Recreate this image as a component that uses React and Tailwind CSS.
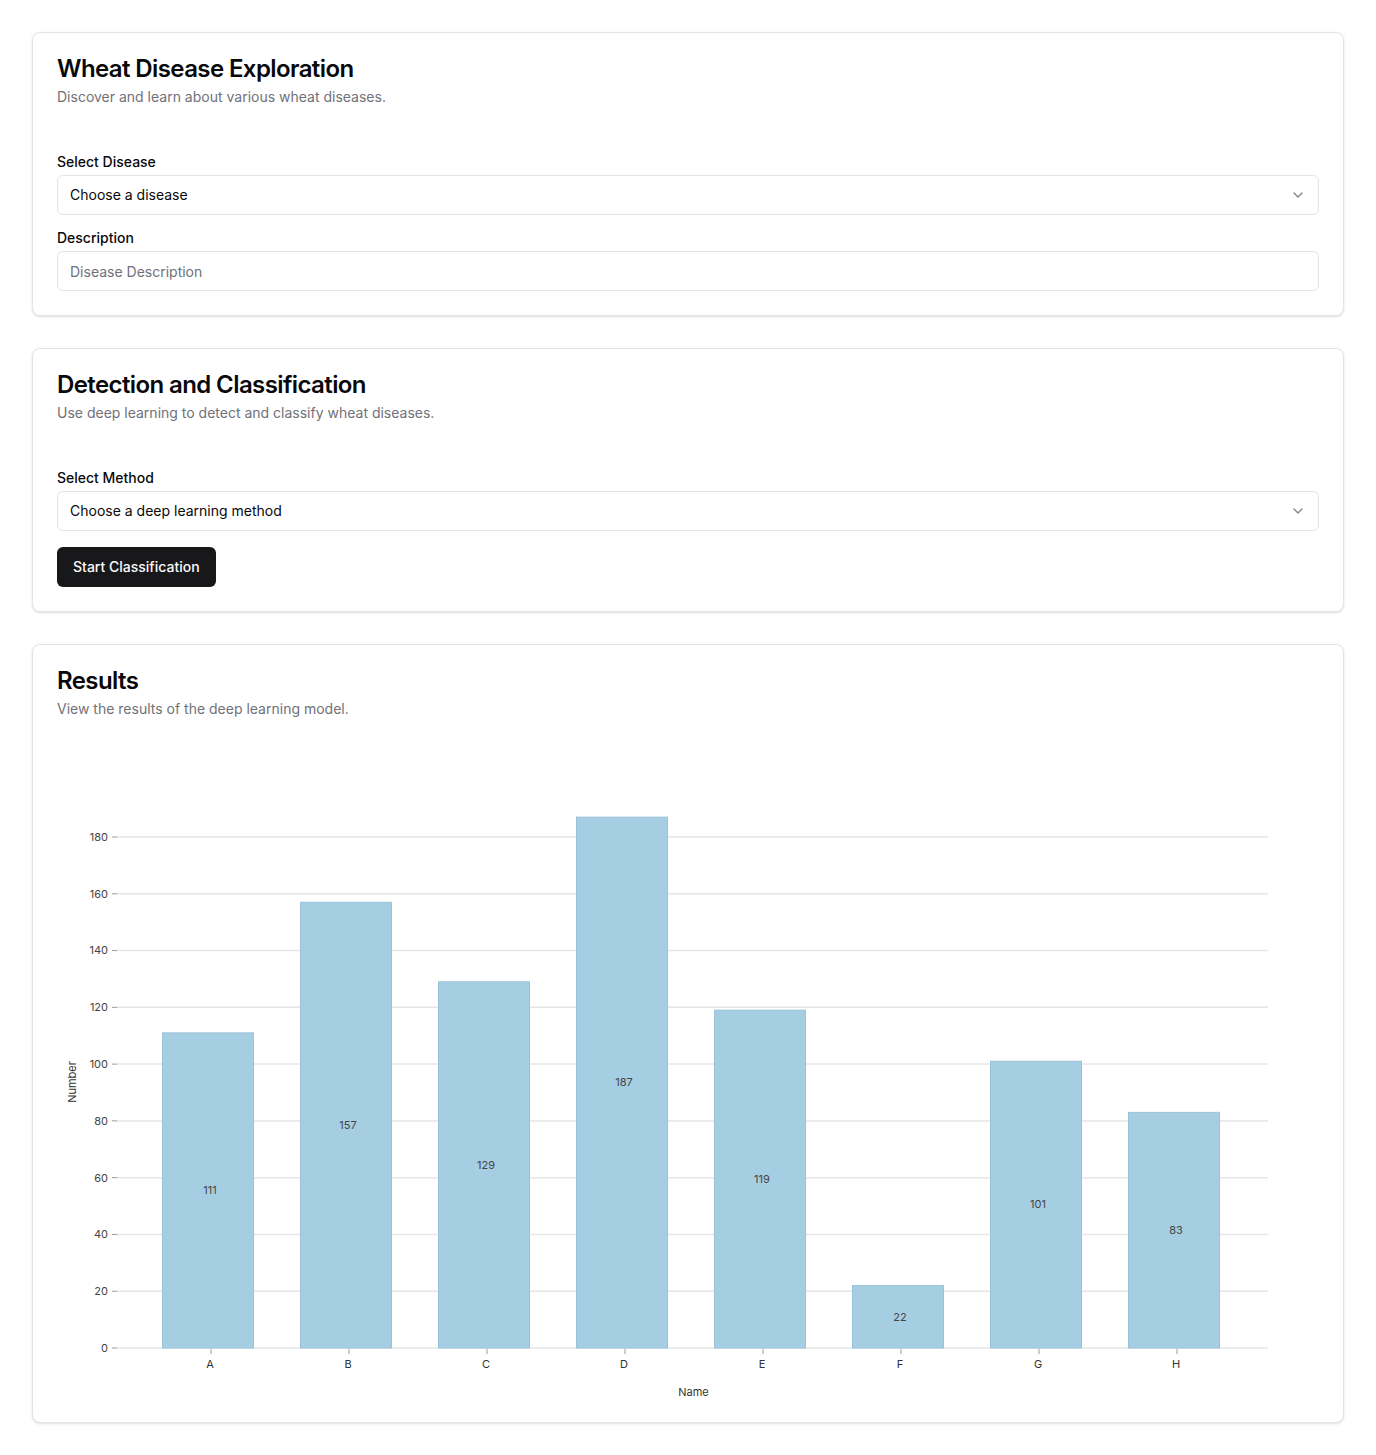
import React from 'react';
import { ChevronDown } from 'lucide-react';

const DATA = [
  { name: 'A', value: 111 },
  { name: 'B', value: 157 },
  { name: 'C', value: 129 },
  { name: 'D', value: 187 },
  { name: 'E', value: 119 },
  { name: 'F', value: 22 },
  { name: 'G', value: 101 },
  { name: 'H', value: 83 },
];

// chart geometry (svg coords)
const W = 1262;
const H = 655;
const X0 = 60;
const X1 = 1211;
const Y0 = 605;
const UNIT = 511 / 180;
const STEP = 138;
const FIRST = 154;
const TICKS = [0, 20, 40, 60, 80, 100, 120, 140, 160, 180];

function Card({ title, desc, children }) {
  return (
    <div className="rounded-lg border border-[#e4e4e7] bg-white shadow-sm">
      <div className="flex flex-col gap-1.5 p-6">
        <h3 className="text-2xl leading-none font-semibold tracking-tight text-[#09090b]">{title}</h3>
        <p className="text-sm text-[#71717a]">{desc}</p>
      </div>
      <div className="px-6 pb-6 pt-6">{children}</div>
    </div>
  );
}

function Select({ text }) {
  return (
    <button
      type="button"
      className="flex h-10 w-full items-center justify-between rounded-md border border-[#e4e4e7] bg-white px-3 text-sm text-[#09090b]"
    >
      <span>{text}</span>
      <ChevronDown className="h-4 w-4 opacity-50" />
    </button>
  );
}

function Label({ children }) {
  return <label className="block text-sm leading-none font-medium text-[#09090b]">{children}</label>;
}

function Chart() {
  return (
    <svg width={W} height={H} className="block overflow-visible" style={{ fontFamily: 'Inter, sans-serif' }}>
      {TICKS.map((t) => {
        const y = Y0 - t * UNIT;
        return (
          <g key={t}>
            <line x1={X0} x2={X1} y1={y} y2={y} stroke="#e6e6e6" strokeWidth="1.5" />
            <line x1={X0 - 5} x2={X0} y1={y} y2={y} stroke="#999" strokeWidth="1" />
            <text x={X0 - 9} y={y} dy="0.35em" textAnchor="end" fontSize="11" fill="#444">
              {t}
            </text>
          </g>
        );
      })}
      {DATA.map((d, i) => {
        const cx = FIRST + i * STEP;
        const h = d.value * UNIT;
        return (
          <g key={d.name}>
            <rect x={cx - 48.5} y={Y0 - h} width={91} height={h} fill="#a6cee3" stroke="#9ac3d9" strokeWidth="1" />
            <text x={cx - 1} y={Y0 - h / 2} dy="0.35em" textAnchor="middle" fontSize="11" fill="#444">
              {d.value}
            </text>
            <line x1={cx} x2={cx} y1={Y0 + 1} y2={Y0 + 6} stroke="#999" strokeWidth="1" />
            <text x={cx - 1} y={Y0 + 16} dy="0.35em" textAnchor="middle" fontSize="11" fill="#333">
              {d.name}
            </text>
          </g>
        );
      })}
      <text x={(X0 + X1) / 2 + 1} y={649} dy="0.35em" textAnchor="middle" fontSize="11" fill="#333">
        Name
      </text>
      <text
        transform={`translate(15, 339) rotate(-90)`}
        dy="0.35em"
        textAnchor="middle"
        fontSize="11"
        fill="#333"
      >
        Number
      </text>
    </svg>
  );
}

export default function App() {
  return (
    <div className="min-h-screen bg-white p-8" style={{ fontFamily: 'Inter, "Noto Sans", sans-serif' }}>
      <div className="flex flex-col gap-8">
        <Card title="Wheat Disease Exploration" desc="Discover and learn about various wheat diseases.">
          <div className="flex flex-col gap-1.5">
            <Label>Select Disease</Label>
            <Select text="Choose a disease" />
          </div>
          <div className="mt-4 flex flex-col gap-1.5">
            <Label>Description</Label>
            <input
              placeholder="Disease Description"
              className="h-10 w-full rounded-md border border-[#e4e4e7] bg-white px-3 text-sm text-[#09090b] placeholder:text-[#71717a] outline-none"
            />
          </div>
        </Card>

        <Card title="Detection and Classification" desc="Use deep learning to detect and classify wheat diseases.">
          <div className="flex flex-col gap-1.5">
            <Label>Select Method</Label>
            <Select text="Choose a deep learning method" />
          </div>
          <button
            type="button"
            className="mt-4 h-10 rounded-md bg-[#18181b] px-4 text-sm font-medium text-[#fafafa]"
          >
            Start Classification
          </button>
        </Card>

        <div className="rounded-lg border border-[#e4e4e7] bg-white shadow-sm">
          <div className="flex flex-col gap-1.5 p-6">
            <h3 className="text-2xl leading-none font-semibold tracking-tight text-[#09090b]">Results</h3>
            <p className="text-sm text-[#71717a]">View the results of the deep learning model.</p>
          </div>
          <div className="px-6 pb-6">
            <Chart />
          </div>
        </div>
      </div>
    </div>
  );
}
